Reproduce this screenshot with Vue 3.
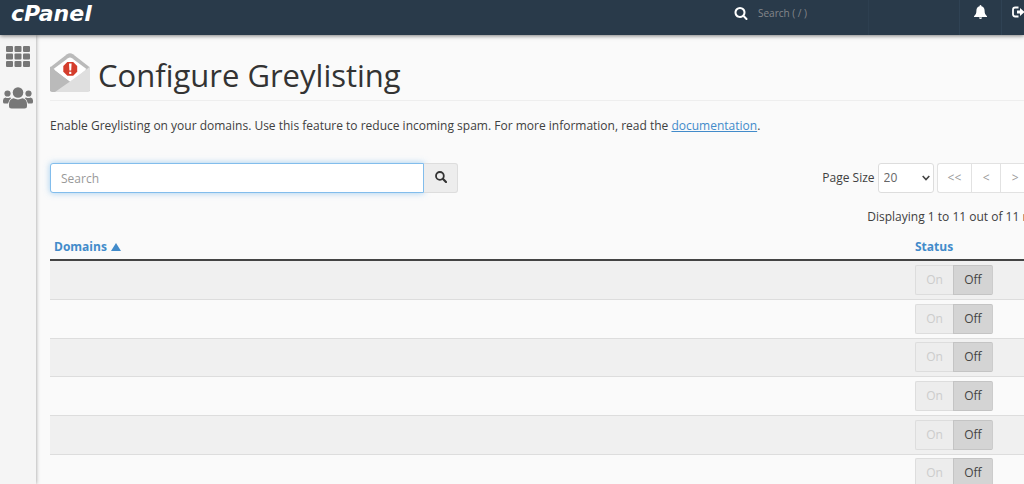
<script setup>
import { ref } from 'vue'

const rows = ref(Array.from({ length: 11 }, (_, i) => ({ id: i + 1, domain: '', enabled: false })))
const query = ref('')
const pageSize = ref('20')
</script>

<template>
  <div class="app">
    <header class="topbar">
      <a class="logo" href="#" aria-label="cPanel home">cPanel</a>
      <div class="top-tools">
        <label class="top-search">
          <svg viewBox="0 0 1792 1792" width="14" height="14" aria-hidden="true"><path fill="#fff" d="M1216 832q0-185-131.500-316.500T768 384 451.500 515.500 320 832t131.500 316.500T768 1280t316.500-131.500T1216 832zm512 832q0 52-38 90t-90 38q-54 0-90-38l-343-342q-179 124-399 124-143 0-273.500-55.500t-225-150-150-225T64 832t55.500-273.500 150-225 225-150T768 128t273.500 55.500 225 150 150 225T1472 832q0 220-124 399l343 343q37 37 37 90z" /></svg>
          <input type="text" placeholder="Search ( / )" aria-label="Search tools" />
        </label>
        <div class="account"></div>
        <button class="top-btn bell" aria-label="Notifications">
          <svg viewBox="0 0 14 15" width="13" height="14" aria-hidden="true"><path fill="#fff" d="M7 0c.6 0 1 .4 1 1v.4c2.200.5 3.400 2.300 3.400 4.600 0 3.400.9 4.600 2.600 6v1H0v-1c1.700-1.400 2.600-2.600 2.600-6C2.600 3.700 3.800 1.900 6 1.400V1c0-.6.4-1 1-1zM5.200 13.500h3.600a1.800 1.500 0 0 1-3.600 0z" /></svg>
        </button>
        <button class="top-btn logout" aria-label="Log out">
          <svg viewBox="0 0 14 12" width="14" height="12" aria-hidden="true"><path fill="none" stroke="#fff" stroke-width="1.800" d="M6.500 1.500H3.300Q1 1.500 1 3.700v4.600q0 2.200 2.300 2.200H6.500" /><path fill="#fff" d="M5 4.500h3V2l4.500 4L8 10V7.500H5z" /></svg>
        </button>
      </div>
    </header>

    <div class="body">
      <nav class="sidebar" aria-label="Main">
        <a href="#" aria-label="Tools">
          <svg viewBox="0 0 24 21" width="24" height="21" aria-hidden="true">
            <g fill="#777">
              <template v-for="r in 3" :key="r">
                <rect v-for="c in 3" :key="c" :x="(c - 1) * 8.500" :y="(r - 1) * 7.500" width="7" height="6" rx="1" />
              </template>
            </g>
          </svg>
        </a>
        <a href="#" aria-label="User manager">
          <svg viewBox="0 0 30 22" width="30" height="22" aria-hidden="true">
            <g fill="#777">
              <circle cx="15" cy="5.500" r="5.300" />
              <circle cx="4.500" cy="6.500" r="3.100" />
              <circle cx="25.500" cy="6.500" r="3.100" />
              <path d="M10.500 11.300q4.500 2.200 9 0 4.500.7 4.500 6.200v1.500q0 2.500-2.500 2.500h-13Q6 21.500 6 19v-1.500q0-5.500 4.500-6.200z" />
              <path d="M2.500 10.500q2 1 4.500 0l1.300.4Q5.500 13 5 16.500H1.500Q0 16.500 0 15v-1.500q0-2.700 2.500-3zM27.500 10.500q-2 1-4.500 0l-1.300.4Q24.500 13 25 16.500h3.500q1.500 0 1.500-1.500v-1.500q0-2.700-2.500-3z" />
            </g>
          </svg>
        </a>
      </nav>

      <main class="content">
        <h1 class="title">
          <svg viewBox="0 0 40 40" width="40" height="40" aria-hidden="true">
            <path fill="#bababa" d="M0 14.500 17 1.300Q20 -.8 23 1.300L40 14.500V38H0z" />
            <path fill="#fff" d="M3.500 16 18 5.200q2-1.300 4 0L36.500 16 20 29z" />
            <path fill="#dfdfdf" d="M40 13.500V37q0 2-2 2H3L37 16z" />
            <path fill="#bababa" d="M0 13.500 20 28.500 5 39H2q-2 0-2-2z" />
            <path fill="#fff" d="M5 17.200 20 28.500 35.500 17 20 8z" />
            <path fill="#d43d2c" d="M17.300 9h5.900l4 4v5.700l-4 4h-5.900l-4-4V13z" />
            <path fill="#fff" d="M19 10.500h2.600l-.4 7h-1.800zM19.200 18.800h2.100v2.100h-2.100z" />
          </svg>
          <span>Configure Greylisting</span>
        </h1>

        <p class="intro">Enable Greylisting on your domains. Use this feature to reduce incoming spam. For more information, read the <a href="#">documentation</a>.</p>

        <div class="toolbar">
          <form class="search" @submit.prevent>
            <input v-model="query" type="text" placeholder="Search" aria-label="Search domains" />
            <button type="submit" aria-label="Search">
              <svg viewBox="0 0 12 12" width="12" height="12" aria-hidden="true"><circle cx="4.900" cy="4.900" r="3.900" fill="none" stroke="#333" stroke-width="1.800" /><path d="M7.800 7.800 11 11" stroke="#333" stroke-width="2.200" stroke-linecap="round" /></svg>
            </button>
          </form>
          <div class="paging">
            <label for="page-size">Page Size</label>
            <div class="select-wrap">
              <select id="page-size" v-model="pageSize">
                <option>10</option>
                <option>20</option>
                <option>50</option>
                <option>100</option>
              </select>
              <svg viewBox="0 0 8 6" width="8" height="6" aria-hidden="true"><path d="M.7 1 4 4.500 7.300 1" fill="none" stroke="#444" stroke-width="1.600" /></svg>
            </div>
            <div class="pager">
              <button disabled>&lt;&lt;</button>
              <button disabled>&lt;</button>
              <button disabled>&gt;</button>
              <button disabled>&gt;&gt;</button>
            </div>
          </div>
        </div>

        <div class="count">Displaying 1 to 11 out of 11 records</div>

        <table class="domains">
          <thead>
            <tr>
              <th><a href="#">Domains <svg viewBox="0 0 10 8" width="10" height="8" aria-hidden="true"><path fill="#428bca" d="M5 0l5 8H0z" /></svg></a></th>
              <th class="status"><a href="#">Status</a></th>
            </tr>
          </thead>
          <tbody>
            <tr v-for="row in rows" :key="row.id">
              <td>{{ row.domain }}</td>
              <td>
                <div class="toggle" role="group" aria-label="Greylisting status">
                  <button :class="{ active: row.enabled }" @click="row.enabled = true">On</button>
                  <button :class="{ active: !row.enabled }" @click="row.enabled = false">Off</button>
                </div>
              </td>
            </tr>
          </tbody>
        </table>
      </main>
    </div>
  </div>
</template>

<style>
body {
  margin: 0;
  background: #fafafa;
}
</style>

<style scoped>
.app {
  height: 100vh;
  overflow: hidden;
  display: flex;
  flex-direction: column;
  background: #fafafa;
  color: #404040;
  font: 12px/18px "Open Sans", "Noto Sans", sans-serif;
}
.app * {
  box-sizing: border-box;
}
button,
input,
select {
  font: inherit;
  margin: 0;
}
svg {
  display: block;
}
.topbar {
  flex: none;
  display: flex;
  justify-content: space-between;
  height: 35px;
  background: #293a4a;
  box-shadow: 0 1px 4px rgba(0, 0, 0, 0.5);
  position: relative;
}
.logo {
  padding-left: 11px;
  color: #fff;
  font: italic 700 22px/27px "DejaVu Sans", sans-serif;
  text-decoration: none;
}
.top-tools {
  display: flex;
  flex: none;
}
.top-search {
  display: flex;
  align-items: center;
  width: 134px;
  height: 26px;
}
.top-search svg {
  flex: none;
}
.top-search input {
  width: 100px;
  margin-left: 10px;
  padding: 0;
  border: 0;
  background: none;
  font-size: 10px;
}
.top-search input::placeholder {
  color: #85878a;
  opacity: 1;
}
.account {
  width: 91px;
  border-left: 1px solid #2d3f50;
}
.top-btn {
  display: flex;
  justify-content: center;
  padding: 5px 0 0;
  width: 42px;
  border: 0;
  border-left: 1px solid #2f4254;
  background: none;
}
.top-btn.logout {
  width: 23px;
  padding: 6px 0 0 10px;
  justify-content: flex-start;
  overflow: hidden;
}
.logout svg {
  flex: none;
}
.body {
  flex: 1;
  display: flex;
  min-height: 0;
}
.sidebar {
  flex: none;
  display: flex;
  flex-direction: column;
  align-items: center;
  gap: 20px;
  width: 36px;
  padding-top: 11px;
  background: #f5f5f5;
  box-shadow: 0 0 4px rgba(0, 0, 0, 0.4);
}
.content {
  flex: 1 0 auto;
  width: calc(100% + 5px);
  padding: 18px 0 0 14px;
}
.title {
  display: flex;
  align-items: flex-start;
  gap: 8px;
  height: 48px;
  margin: 0;
  border-bottom: 1px solid #eee;
  font-size: 31px;
  line-height: 44px;
  font-weight: 400;
  color: #333;
}
.intro {
  margin: 16px 0 28px;
}
a {
  color: #428bca;
}
.toolbar {
  display: flex;
  justify-content: space-between;
}
.search {
  display: flex;
  width: 408px;
}
.search input {
  flex: 1;
  min-width: 0;
  height: 30px;
  padding: 0 10px;
  border: 1px solid #82bdec;
  border-radius: 3px 0 0 3px;
  background: #fff;
  box-shadow: 0 0 6px rgba(102, 175, 233, 0.6);
  outline: 0;
}
.search input::placeholder {
  color: #999;
  opacity: 1;
}
.search button {
  display: flex;
  align-items: center;
  justify-content: center;
  width: 34px;
  padding: 0 0 2px;
  border: 1px solid #ddd;
  border-left: 0;
  border-radius: 0 3px 3px 0;
  background: #ededed;
}
.paging {
  display: flex;
  align-items: center;
}
.select-wrap {
  position: relative;
  margin: 0 3px;
}
.select-wrap svg {
  position: absolute;
  right: 4px;
  top: 12px;
  pointer-events: none;
}
select {
  appearance: none;
  display: block;
  width: 56px;
  height: 30px;
  padding: 0 5px;
  border: 1px solid #ddd;
  border-radius: 3px;
  background: #fff;
  color: #666;
}
.pager {
  display: flex;
}
.pager button {
  height: 30px;
  min-width: 29px;
  padding: 0 10px;
  border: 1px solid #e2e2e2;
  border-right-width: 0;
  background: #fff;
  color: #999;
}
.pager button:first-child {
  border-radius: 3px 0 0 3px;
}
.pager button:last-child {
  border-right-width: 1px;
  border-radius: 0 3px 3px 0;
}
.count {
  margin: 15px 0 10px;
  text-align: right;
}
.domains {
  width: 100%;
  border-collapse: separate;
  border-spacing: 0;
  table-layout: fixed;
}
th {
  padding: 2px 4px 3px;
  border-bottom: 2px solid #444;
  text-align: left;
  font-weight: 700;
}
th a {
  text-decoration: none;
}
th svg {
  display: inline-block;
  margin-left: 1px;
}
.status {
  width: 154px;
}
td {
  padding: 4px;
  border-bottom: 1px solid #ddd;
}
tr:nth-child(3n) td {
  padding-top: 3px;
}
tbody tr:nth-child(odd) {
  background: #f0f0f0;
}
.toggle {
  display: flex;
}
.toggle button {
  height: 30px;
  width: 38px;
  padding: 0;
  border: 1px solid #ddd;
  border-right: 0;
  border-radius: 2px 0 0 2px;
  background: #ededed;
  color: #ccc;
}
.toggle button:last-child {
  width: 40px;
  border-right: 1px solid #ccc;
  border-radius: 0 2px 2px 0;
}
.toggle .active {
  border-color: #c4c4c4;
  background: #d4d4d4;
  color: #444;
}
</style>
